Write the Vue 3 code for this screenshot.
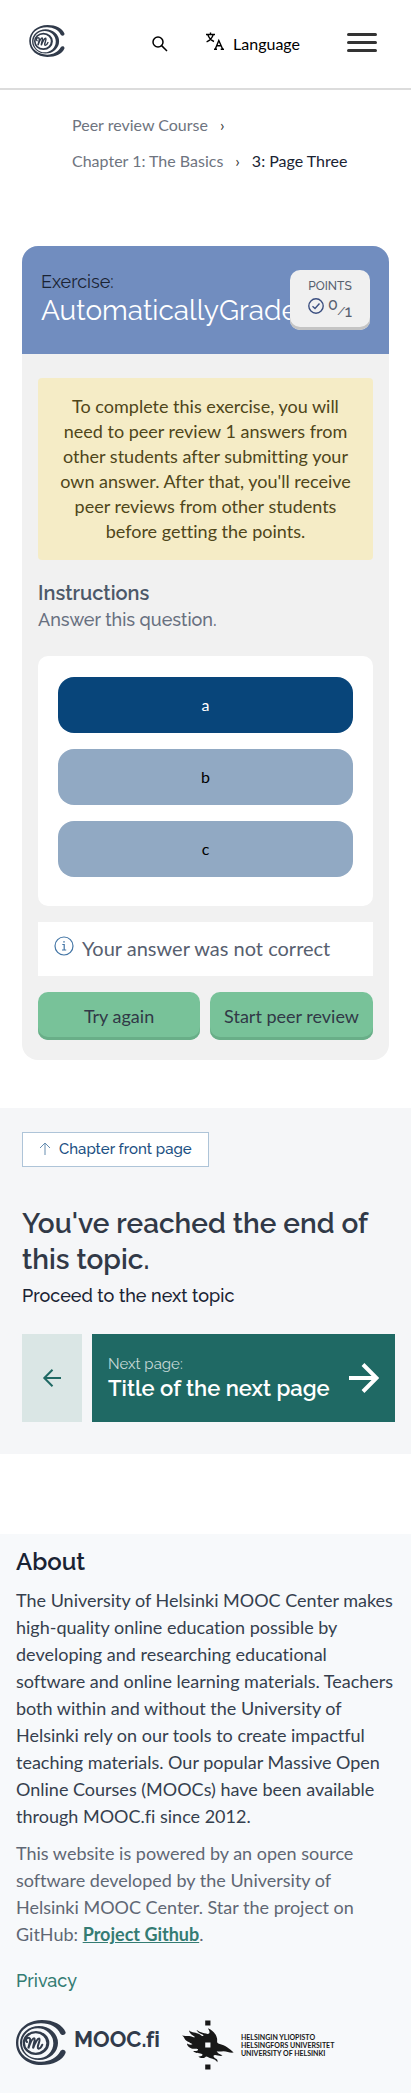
<script setup>
import { ref } from 'vue'

const options = ['a', 'b', 'c']
const selected = ref('a')
</script>

<template>
  <div class="page">
    <header class="topbar">
      <a class="home" href="#" aria-label="Home">
        <svg class="mark" viewBox="0 0 150 135" aria-hidden="true">
          <path fill-rule="evenodd" d="M149 37C140 14 112 0 78 0C34 0 0 29 0 68C0 107 34 135 76 135C111 135 140 121 149 98C149 88 137 87 133 94C123 112 102 125 76 125C38 125 7 103 7 68C7 33 36 9 76 10C102 10 124 22 133 41C138 48 149 46 149 37Z" />
          <path fill-rule="evenodd" d="M12 69A57 51 0 1 1 126 69A57 51 0 1 1 12 69ZM18 70A47 45 0 1 0 112 70A47 45 0 1 0 18 70Z" />
          <path fill-rule="evenodd" d="M20 69A40 36 0 1 1 100 69A40 36 0 1 1 20 69ZM27 69A32 29 0 1 0 91 69A32 29 0 1 0 27 69Z" />
          <path class="pen" d="M33 66C25 57 36 50 42 56C45 61 38 77 37 85C42 71 49 55 54 55C60 56 51 75 51 85C56 71 65 54 70 56C75 61 59 84 68 86C74 86 77 79 79 74" />
        </svg>
      </a>
      <button class="icon-btn search" type="button" aria-label="Search">
        <svg viewBox="0 0 16 16" width="16" height="16" aria-hidden="true">
          <circle cx="6" cy="6" r="5" />
          <path d="M9.6 9.6L15 15" />
        </svg>
      </button>
      <button class="icon-btn language" type="button">
        <svg viewBox="0 0 18 18" width="18" height="18" aria-hidden="true">
          <path d="M0 2.5H9M4.5 .4V2.5M1.8 2.8C3 6 5 8.300 8 9.500M7.200 2.800C6 6.500 4 8.500 .6 9.800" />
          <path d="M9.300 17L12.800 8.500L16.600 17M10.600 13.800H15.200M8 17.200H11M14.700 17.200H18" />
        </svg>
        <span>Language</span>
      </button>
      <button class="burger" type="button" aria-label="Open menu">
        <span></span><span></span><span></span>
      </button>
    </header>

    <nav class="crumbs" aria-label="Breadcrumbs">
      <ol>
        <li><a href="#">Peer review Course</a><span class="sep">›</span></li>
        <li><a href="#">Chapter 1: The Basics</a><span class="sep">›</span></li>
        <li><span class="current">3: Page Three</span></li>
      </ol>
    </nav>

    <main>
      <section class="exercise">
        <div class="exercise-head">
          <h2><span class="kicker">Exercise:</span><span class="title">AutomaticallyGraded</span></h2>
          <div class="points">
            <span class="points-label">POINTS</span>
            <div class="score">
              <svg viewBox="0 0 16 16" width="16" height="16" aria-hidden="true">
                <circle cx="8" cy="8" r="7.200" />
                <path d="M4.500 8.300L7 10.500L11.500 5.500" />
              </svg>
              <span><sup>0</sup><i>/</i><sub>1</sub></span>
            </div>
          </div>
        </div>
        <div class="exercise-body">
          <p class="notice">To complete this exercise, you will need to peer review 1 answers from other students after submitting your own answer. After that, you'll receive peer reviews from other students before getting the points.</p>
          <h3>Instructions</h3>
          <p class="question">Answer this question.</p>
          <div class="options">
            <button
              v-for="option in options"
              :key="option"
              type="button"
              :class="{ chosen: option === selected }"
              :aria-pressed="option === selected"
              @click="selected = option"
            >{{ option }}</button>
          </div>
          <div class="feedback" role="status">
            <svg viewBox="0 0 20 20" width="20" height="20" aria-hidden="true">
              <circle cx="10" cy="10" r="9" />
              <path d="M8.300 8.500H10.200V14M8 14H12.200" />
              <path class="dot" d="M9.200 5.200H10.800V6.500H9.200Z" />
            </svg>
            <span>Your answer was not correct</span>
          </div>
          <div class="actions">
            <button type="button">Try again</button>
            <button type="button">Start peer review</button>
          </div>
        </div>
      </section>

      <section class="progress">
        <a class="chapter-link" href="#">
          <svg viewBox="0 0 12 14" width="12" height="14" aria-hidden="true"><path d="M6 13V1M1 6L6 1L11 6" /></svg>
          <span>Chapter front page</span>
        </a>
        <h2>You've reached the end of this topic.</h2>
        <p>Proceed to the next topic</p>
        <div class="pager">
          <a class="prev" href="#" aria-label="Previous page">
            <svg viewBox="0 0 20 20" width="20" height="20" aria-hidden="true"><path d="M19 10H2.500M10.500 1.800L2.300 10L10.500 18.200" /></svg>
          </a>
          <a class="next" href="#">
            <span class="next-text"><small>Next page:</small><strong>Title of the next page</strong></span>
            <svg viewBox="0 0 30 30" width="30" height="30" aria-hidden="true"><path d="M0 15H27M14 1.500L27.500 15L14 28.500" /></svg>
          </a>
        </div>
      </section>
    </main>

    <footer>
      <h2>About</h2>
      <p class="about">The University of Helsinki MOOC Center makes high-quality online education possible by developing and researching educational software and online learning materials. Teachers both within and without the University of Helsinki rely on our tools to create impactful teaching materials. Our popular Massive Open Online Courses (MOOCs) have been available through MOOC.fi since 2012.</p>
      <p class="source">This website is powered by an open source software developed by the University of Helsinki MOOC Center. Star the project on GitHub: <a href="#">Project Github</a>.</p>
      <a class="privacy" href="#">Privacy</a>
      <div class="logos">
        <a class="mooc" href="#">
          <svg class="mark" viewBox="0 0 150 135" aria-hidden="true">
            <path fill-rule="evenodd" d="M149 37C140 14 112 0 78 0C34 0 0 29 0 68C0 107 34 135 76 135C111 135 140 121 149 98C149 88 137 87 133 94C123 112 102 125 76 125C38 125 7 103 7 68C7 33 36 9 76 10C102 10 124 22 133 41C138 48 149 46 149 37Z" />
            <path fill-rule="evenodd" d="M12 69A57 51 0 1 1 126 69A57 51 0 1 1 12 69ZM18 70A47 45 0 1 0 112 70A47 45 0 1 0 18 70Z" />
            <path fill-rule="evenodd" d="M20 69A40 36 0 1 1 100 69A40 36 0 1 1 20 69ZM27 69A32 29 0 1 0 91 69A32 29 0 1 0 27 69Z" />
            <path class="pen" d="M33 66C25 57 36 50 42 56C45 61 38 77 37 85C42 71 49 55 54 55C60 56 51 75 51 85C56 71 65 54 70 56C75 61 59 84 68 86C74 86 77 79 79 74" />
          </svg>
          <span>MOOC.fi</span>
        </a>
        <a class="helsinki" href="#">
          <svg viewBox="0 0 159 150" aria-hidden="true">
            <path fill-rule="evenodd" d="M0 46C10 49 17 46 26 48C32 49 36 53 40 51C34 44 25 45 21 30C31 39 44 36 54 42C60 46 62 50 66 46C62 40 51 42 44 28C57 38 70 39 78 41C86 41 86 34 79 24C94 30 104 41 107 54C109 62 104 68 113 71C123 74 132 76 139 83C147 88 150 91 158 98C146 100 138 94 127 94C119 94 113 96 106 94C111 103 120 104 124 107C117 111 108 105 99 106C93 107 98 113 104 117C109 119 109 123 108 128C101 117 92 118 85 115C78 112 75 107 70 113C64 117 55 115 50 110C57 111 65 107 62 103C55 98 43 102 34 93C43 95 50 92 49 88C42 84 37 89 26 84C18 81 15 75 15 70C21 76 29 74 32 73C24 66 13 65 8 56C6 51 5 49 0 46ZM71 67V83H87V67Z" />
            <path d="M71 0H87V15H71ZM71 135H87V150H71Z" />
          </svg>
          <span>HELSINGIN YLIOPISTO<br>HELSINGFORS UNIVERSITET<br>UNIVERSITY OF HELSINKI</span>
        </a>
      </div>
    </footer>
  </div>
</template>

<style>
body {
  margin: 0;
  background: #fff;
}
</style>

<style scoped>
.page {
  font-family: Lato, "Open Sans", sans-serif;
  font-size: 18px;
  font-variant-ligatures: none;
  color: #1a2333;
}
h2, h3, p, ol {
  margin: 0;
  padding: 0;
}
a {
  color: inherit;
  text-decoration: none;
}
button {
  margin: 0;
  padding: 0;
  border: 0;
  background: none;
  font: inherit;
  color: inherit;
  cursor: pointer;
}
svg {
  display: block;
  flex: none;
  fill: none;
  stroke: currentColor;
}
.mark {
  fill: #313b4b;
  stroke: none;
}
.mark .pen {
  fill: none;
  stroke: #313b4b;
  stroke-width: 6;
  stroke-linecap: round;
}
.topbar {
  display: flex;
  align-items: center;
  height: 88px;
  padding: 0 34px 0 29px;
  border-bottom: 2px solid #dcdcdc;
}
.home {
  margin-right: auto;
  padding-bottom: 6px;
}
.home .mark {
  width: 36px;
  height: 32px;
}
.icon-btn {
  display: flex;
  align-items: center;
  font-size: 16px;
  line-height: 24px;
  color: #000;
}
.search svg {
  stroke-width: 1.500;
}
.language {
  gap: 9px;
  margin: 0 47px 0 38px;
}
.language svg {
  margin-bottom: 6px;
  stroke-width: 1.400;
}
.burger {
  display: flex;
  flex-direction: column;
  gap: 5px;
  padding-bottom: 4px;
}
.burger span {
  width: 30px;
  height: 3px;
  border-radius: 2px;
  background: #333;
}
.crumbs {
  padding: 17px 48px 0 72px;
  font-size: 16px;
  line-height: 36px;
  color: #6e7480;
}
.crumbs ol {
  display: flex;
  flex-wrap: wrap;
  list-style: none;
}
.crumbs li:first-child {
  flex-basis: 100%;
}
.sep {
  margin: 0 12px;
  color: #333;
}
.current {
  color: #1a2333;
}
.exercise {
  margin: 67px 22px 48px;
  border-radius: 16px;
  background: #f1f1f1;
  overflow: hidden;
}
.exercise-head {
  position: relative;
  min-height: 108px;
  box-sizing: border-box;
  padding: 24px 19px;
  background: #718dbf;
}
.exercise-head h2 {
  display: flex;
  flex-direction: column;
  font-family: Raleway, Lato, sans-serif;
  font-weight: 400;
}
.kicker {
  font-size: 18px;
  line-height: 24px;
}
.title {
  font-size: 28px;
  line-height: 34px;
  color: #fff;
}
.points {
  position: absolute;
  top: 24px;
  right: 19px;
  width: 80px;
  height: 60px;
  box-sizing: border-box;
  padding-top: 8px;
  border-radius: 10px;
  background: #f0f0f0;
  box-shadow: inset 0 -3px 0 #c4c4c4;
  font-family: Raleway, Lato, sans-serif;
  font-weight: 500;
  text-align: center;
  color: #57606f;
}
.points-label {
  display: block;
  font-size: 12px;
  line-height: 16px;
}
.score {
  display: flex;
  justify-content: center;
  gap: 4px;
  margin-top: 4px;
  font-size: 16px;
  line-height: 16px;
}
.score svg {
  stroke: #3b4f80;
  stroke-width: 1.400;
}
.score sup, .score sub {
  font-size: 16px;
  line-height: 0;
}
.score sup {
  vertical-align: 1px;
}
.score sub {
  vertical-align: -6px;
}
.score i {
  font-size: 11px;
  line-height: 0;
  vertical-align: -4px;
}
.exercise-body {
  padding: 24px 16px 20px;
}
.notice {
  padding: 16px 20px;
  border-radius: 4px;
  background: #f5ecc6;
  line-height: 25px;
  text-align: center;
  color: #4f461a;
}
h3 {
  margin-top: 20px;
  font-family: Raleway, Lato, sans-serif;
  font-size: 20px;
  font-weight: 600;
  line-height: 26px;
  color: #4c5869;
}
.question {
  font-family: Raleway, Lato, sans-serif;
  font-weight: 500;
  line-height: 28px;
  color: #687080;
}
.options {
  display: flex;
  flex-direction: column;
  gap: 16px;
  margin-top: 22px;
  padding: 21px 20px 29px;
  border-radius: 10px;
  background: #fff;
}
.options button {
  min-height: 56px;
  padding-bottom: 2px;
  border-radius: 16px;
  background: #91a9c3;
  font-size: 16px;
  color: #000;
}
.options .chosen {
  background: #08457a;
  color: #fff;
}
.feedback {
  display: flex;
  gap: 8px;
  margin-top: 16px;
  padding: 14px 16px 16px;
  background: #fff;
  font-size: 20px;
  line-height: 24px;
  color: #57606f;
}
.feedback svg {
  color: #4375a5;
  stroke-width: 1.200;
}
.dot {
  fill: currentColor;
  stroke: none;
}
.actions {
  display: flex;
  gap: 10px;
  margin-top: 16px;
}
.actions button {
  flex: 1;
  min-height: 48px;
  padding: 0 14px;
  border-radius: 10px;
  background: #78c299;
  box-shadow: inset 0 -3px 0 #69ae88;
  color: #313947;
  white-space: nowrap;
}
.progress {
  padding: 24px 16px 32px 22px;
  background: #f5f6f8;
  font-family: Raleway, Lato, sans-serif;
}
.chapter-link {
  display: inline-flex;
  align-items: center;
  gap: 8px;
  padding: 4px 16px 5px;
  border: 1px solid #aec4d8;
  background: #fff;
  font-size: 15px;
  font-weight: 500;
  line-height: 24px;
  color: #1c5083;
}
.chapter-link svg {
  color: #668db0;
}
.progress h2 {
  margin-top: 39px;
  font-size: 28px;
  font-weight: 600;
  line-height: 36px;
  color: #313947;
}
.progress p {
  line-height: 36px;
  font-weight: 500;
}
.pager {
  display: flex;
  gap: 10px;
  margin-top: 20px;
}
.prev {
  display: flex;
  align-items: center;
  justify-content: center;
  width: 60px;
  background: #dae6e5;
  color: #1f6964;
}
.prev svg {
  stroke-width: 2;
}
.next {
  display: flex;
  flex: 1;
  align-items: center;
  justify-content: space-between;
  min-height: 88px;
  padding: 0 16px;
  background: #1f6964;
  color: #fff;
}
.next-text {
  display: flex;
  flex-direction: column;
  padding-bottom: 4px;
}
.next small {
  font-size: 15px;
  line-height: 24px;
  color: #c7dad8;
}
.next strong {
  font-size: 22px;
  font-weight: 600;
  line-height: 24px;
}
.next svg {
  stroke-width: 4;
}
footer {
  margin-top: 80px;
  padding: 12px 16px 24px;
  background: #f7f9fb;
  line-height: 27px;
}
footer h2 {
  font-family: Raleway, Lato, sans-serif;
  font-size: 24px;
  font-weight: 600;
  line-height: 32px;
}
.about {
  margin-top: 9px;
  color: #353f4e;
}
.source {
  margin-top: 10px;
  color: #5f6774;
}
.source a {
  font-weight: 700;
  color: #347c73;
  text-decoration: underline;
}
.privacy {
  display: block;
  margin-top: 19px;
  font-family: Raleway, Lato, sans-serif;
  font-weight: 500;
  color: #347c73;
}
.logos {
  display: flex;
  align-items: flex-start;
  gap: 22px;
  margin-top: 26px;
}
.mooc {
  display: flex;
  gap: 8px;
  color: #313b4b;
}
.mooc .mark {
  width: 50px;
  height: 45px;
}
.mooc span {
  font-family: Raleway, Lato, sans-serif;
  font-size: 22px;
  font-weight: 700;
  line-height: 38px;
}
.helsinki {
  display: flex;
  align-items: center;
  gap: 7px;
  color: #181818;
}
.helsinki svg {
  width: 52px;
  height: 50px;
  fill: currentColor;
  stroke: none;
}
.helsinki span {
  font-size: 7px;
  font-weight: 700;
  line-height: 8px;
  white-space: nowrap;
}
</style>
